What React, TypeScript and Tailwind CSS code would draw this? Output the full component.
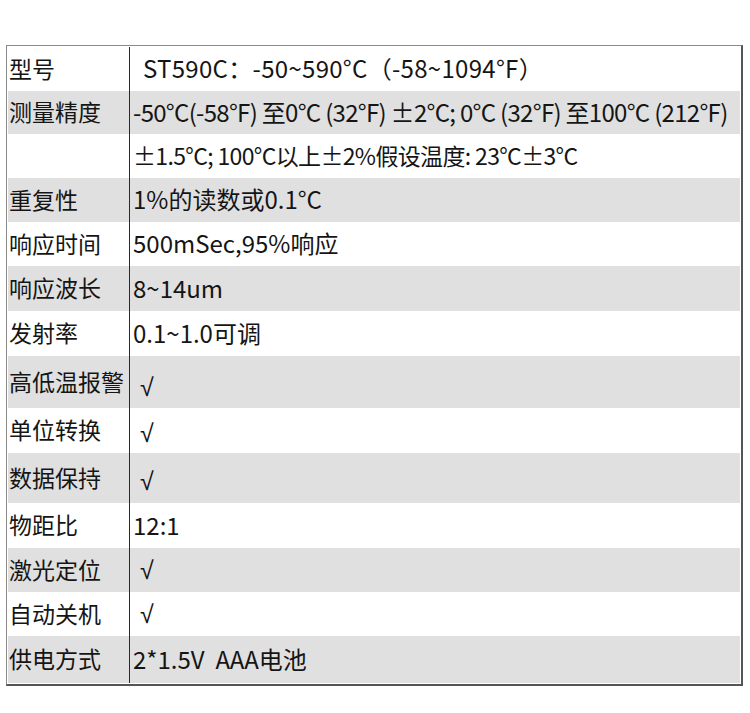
import React from 'react';

type Spec = {
    label: string;
    value: React.ReactNode;
    h: string;
    gray: boolean;
    check?: string;
};

const Check: React.FC<{ pad: string }> = ({ pad }) => (
    <span className={`pl-[7px] ${pad} font-['Liberation_Sans',sans-serif] text-[25px] leading-none`}>√</span>
);

const specs: Spec[] = [
    { label: '型号', h: 'h-[44px]', gray: false, value: <span className="pl-[10px] tracking-[0.3px]">ST590C：-50~590°C（-58~1094°F）</span> },
    { label: '测量精度', h: 'h-[43px]', gray: true, value: <span className="tracking-[-0.7px]">-50°C(-58°F) 至0°C (32°F) ±2°C; 0°C (32°F) 至100°C (212°F)</span> },
    { label: '', h: 'h-[44px]', gray: false, value: <span className="text-[23px] tracking-[-0.65px]">±1.5°C; 100°C以上±2%假设温度: 23°C±3°C</span> },
    { label: '重复性', h: 'h-[44px]', gray: true, value: '1%的读数或0.1°C' },
    { label: '响应时间', h: 'h-[44px]', gray: false, value: '500mSec,95%响应' },
    { label: '响应波长', h: 'h-[45px]', gray: true, value: '8~14um' },
    { label: '发射率', h: 'h-[45px]', gray: false, value: '0.1~1.0可调' },
    { label: '高低温报警', h: 'h-[52px]', gray: true, check: 'pt-[12px]', value: '' },
    { label: '单位转换', h: 'h-[45px]', gray: false, check: 'pt-[7px]', value: '' },
    { label: '数据保持', h: 'h-[50px]', gray: true, check: 'pt-[8px]', value: '' },
    { label: '物距比', h: 'h-[45px]', gray: false, value: '12:1' },
    { label: '激光定位', h: 'h-[44px]', gray: true, check: 'pt-[2px]', value: '' },
    { label: '自动关机', h: 'h-[44px]', gray: false, check: 'pt-[2px]', value: '' },
    { label: '供电方式', h: 'h-[47px]', gray: true, value: '2*1.5V  AAA电池' },
];

const App: React.FC = () => {
    return (
        <div className="w-[750px] h-[713px] bg-white pt-[45px] pl-[6px] font-['Noto_Sans_CJK_SC','Noto_Sans',sans-serif] text-[#151515]">
            <div className="w-[737px] border-t border-l border-t-[#8a8a8a] border-l-[#8a8a8a] border-r-2 border-b-2 border-r-[#555] border-b-[#555] p-px">
                {specs.map((row, index) => (
                    <div key={index} className={`flex ${row.h} ${row.gray ? 'bg-[#e0e0e0]' : 'bg-white'}`}>
                        <div className="w-[122px] flex items-center pl-[1px] pb-[2px] text-[23px] leading-none border-r border-[#2a2a2a]">
                            {row.label}
                        </div>
                        <div className="flex-1 flex items-center pl-[3px] pb-[2px] text-[24px] leading-none whitespace-pre">
                            {row.check ? <Check pad={row.check} /> : row.value}
                        </div>
                    </div>
                ))}
            </div>
        </div>
    );
};

export default App;
